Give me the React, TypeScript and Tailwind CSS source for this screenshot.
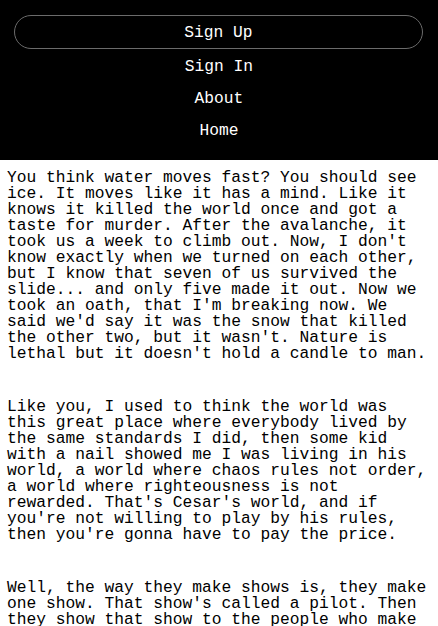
import React from "react";

const paragraphs = [
  "You think water moves fast? You should see ice. It moves like it has a mind. Like it knows it killed the world once and got a taste for murder. After the avalanche, it took us a week to climb out. Now, I don't know exactly when we turned on each other, but I know that seven of us survived the slide... and only five made it out. Now we took an oath, that I'm breaking now. We said we'd say it was the snow that killed the other two, but it wasn't. Nature is lethal but it doesn't hold a candle to man.",
  "Like you, I used to think the world was this great place where everybody lived by the same standards I did, then some kid with a nail showed me I was living in his world, a world where chaos rules not order, a world where righteousness is not rewarded. That's Cesar's world, and if you're not willing to play by his rules, then you're gonna have to pay the price.",
  "Well, the way they make shows is, they make one show. That show's called a pilot. Then they show that show to the people who make shows, and on the strength of that one show they decide if they're going to make more shows. Some pilots get picked and become television programs. Some don't, become nothing.",
];

export default function App() {
  return (
    <div className="min-h-screen bg-white font-['Liberation_Mono',monospace] text-[16.25px] leading-[16px]">
      <nav className="flex flex-col bg-black py-[15px] text-white">
        <a className="ml-[14px] mr-[15px] block rounded-full border border-[#6b6b6b] pt-[9px] pb-[7px] text-center">
          Sign Up
        </a>
        <a className="block pt-[10px] pb-[6px] text-center">Sign In</a>
        <a className="block pt-[10px] pb-[6px] text-center">About</a>
        <a className="block pt-[10px] pb-[6px] text-center">Home</a>
      </nav>
      <main className="flex flex-col gap-[37px] px-[7px] pt-[10px] text-black">
        {paragraphs.map((p, i) => (
          <p key={i}>{p}</p>
        ))}
      </main>
    </div>
  );
}
